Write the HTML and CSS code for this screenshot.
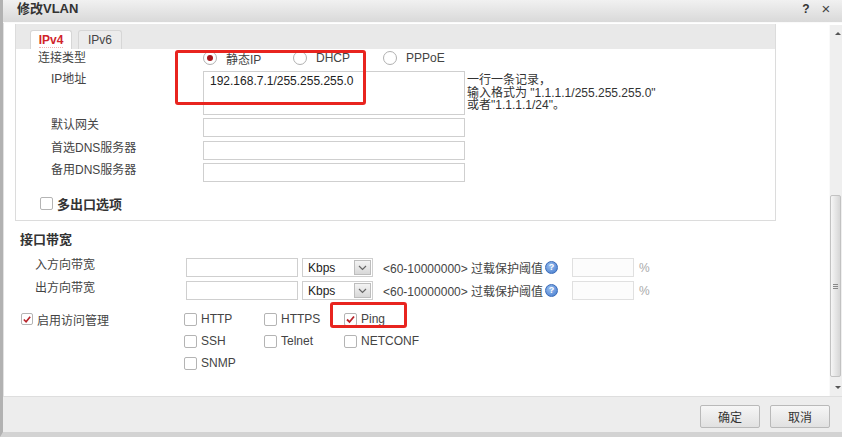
FILE: index.html
```html
<!DOCTYPE html>
<html lang="zh-CN">
<head>
<meta charset="utf-8">
<title>修改VLAN</title>
<link rel="stylesheet" href="styles.css">
</head>
<body>
<div class="window">
  <div class="titlebar">
    <span class="title">修改VLAN</span>
    <span class="tb-icons"><span class="tb-help">?</span><span class="tb-close">×</span></span>
  </div>
  <div class="main">
    <div class="content">
      <div class="panel">
        <div class="tabs">
          <div class="tab active"><span class="tab-text">IPv4</span></div>
          <div class="tab">IPv6</div>
        </div>
        <div class="panel-body">
          <div class="row row-radio">
            <div class="lbl lbl-conn">连接类型</div>
            <div class="radios">
              <span class="radio-opt"><span class="radio checked"></span>静态IP</span>
              <span class="radio-opt"><span class="radio"></span>DHCP</span>
              <span class="radio-opt"><span class="radio"></span>PPPoE</span>
            </div>
          </div>
          <div class="row row-ip">
            <div class="lbl">IP地址</div>
            <div class="textarea">192.168.7.1/255.255.255.0</div>
            <div class="hint">一行一条记录，<br>输入格式为 "1.1.1.1/255.255.255.0"<br>或者"1.1.1.1/24"。</div>
          </div>
          <div class="row row-field gw">
            <div class="lbl">默认网关</div>
            <div class="input wide"></div>
          </div>
          <div class="row row-field dns1">
            <div class="lbl">首选DNS服务器</div>
            <div class="input wide"></div>
          </div>
          <div class="row row-field dns2">
            <div class="lbl">备用DNS服务器</div>
            <div class="input wide"></div>
          </div>
          <div class="row row-multi">
            <span class="checkbox"></span><span class="bold-label">多出口选项</span>
          </div>
        </div>
      </div>

      <div class="section-title">接口带宽</div>
      <div class="bw-row first">
        <div class="bw-lbl">入方向带宽</div>
        <div class="input bw"></div>
        <div class="select"><span>Kbps</span><span class="sel-btn"><svg width="9" height="6" viewBox="0 0 9 6"><polyline points="1,1 4.5,4.5 8,1" fill="none" stroke="#666" stroke-width="1.2"/></svg></span></div>
        <div class="range">&lt;60-10000000&gt; 过载保护阈值</div>
        <span class="help">?</span>
        <div class="input pct"></div>
        <span class="pct-sign">%</span>
      </div>
      <div class="bw-row">
        <div class="bw-lbl">出方向带宽</div>
        <div class="input bw"></div>
        <div class="select"><span>Kbps</span><span class="sel-btn"><svg width="9" height="6" viewBox="0 0 9 6"><polyline points="1,1 4.5,4.5 8,1" fill="none" stroke="#666" stroke-width="1.2"/></svg></span></div>
        <div class="range">&lt;60-10000000&gt; 过载保护阈值</div>
        <span class="help">?</span>
        <div class="input pct"></div>
        <span class="pct-sign">%</span>
      </div>

      <div class="access">
        <div class="access-lbl"><span class="checkbox checked"><svg width="11" height="11" viewBox="0 0 11 11"><polyline points="2,5.5 4.5,8 9,2.5" fill="none" stroke="#b8232a" stroke-width="1.8"/></svg></span>启用访问管理</div>
        <div class="opts">
          <span class="opt"><span class="checkbox"></span>HTTP</span>
          <span class="opt"><span class="checkbox"></span>HTTPS</span>
          <span class="opt"><span class="checkbox checked"><svg width="11" height="11" viewBox="0 0 11 11"><polyline points="2,5.5 4.5,8 9,2.5" fill="none" stroke="#b8232a" stroke-width="1.8"/></svg></span>Ping</span>
          <span class="opt"><span class="checkbox"></span>SSH</span>
          <span class="opt"><span class="checkbox"></span>Telnet</span>
          <span class="opt"><span class="checkbox"></span>NETCONF</span>
          <span class="opt"><span class="checkbox"></span>SNMP</span>
        </div>
      </div>
    </div>
    <div class="scrollbar">
      <div class="sb-btn"><span class="tri-up"></span></div>
      <div class="sb-track">
        <div class="sb-thumb"><span class="grip"></span></div>
      </div>
      <div class="sb-btn"><span class="tri-down"></span></div>
    </div>
  </div>
  <div class="footer">
    <button class="btn">确定</button>
    <button class="btn">取消</button>
  </div>
</div>
<div class="mark mark-ip"></div>
<div class="mark mark-ping"></div>
</body>
</html>
```

FILE: styles.css
```css
* { box-sizing: border-box; }
html, body { margin: 0; padding: 0; }
body {
  width: 842px;
  height: 437px;
  overflow: hidden;
  position: relative;
  background: #fff;
  font-family: "Liberation Sans", "Noto Sans CJK SC", sans-serif;
  font-size: 12px;
  color: #333;
}
.window {
  height: 437px;
  display: flex;
  flex-direction: column;
  border-left: 3px solid #b2b2b2;
  border-bottom: 5px solid #d3d3d3;
}
.titlebar {
  height: 23px;
  flex: none;
  display: flex;
  align-items: flex-start;
  padding-left: 14px;
  background: linear-gradient(#f1f1f1, #d9d9d9);
  border-bottom: 1px solid #fafafa;
}
.title {
  font-size: 13px;
  font-weight: bold;
  line-height: 18px;
  color: #333;
}
.tb-icons {
  margin-left: auto;
  display: flex;
  line-height: 18px;
  padding-right: 6px;
  color: #333;
}
.tb-help { font-weight: bold; font-size: 12px; width: 20px; text-align: center; }
.tb-close { font-size: 15px; width: 20px; text-align: center; color: #444; }

.main {
  flex: 1;
  display: flex;
  min-height: 0;
}
.content {
  flex: 1;
  border-left: 1px solid #e2e2e2;
  background: #fff;
  padding-left: 11px;
  padding-top: 1px;
}
.panel {
  width: 761px;
  border: 1px solid #dcdcdc;
  border-top: none;
}
.tabs {
  height: 25px;
  background: #e9e9e9;
  display: flex;
  align-items: flex-end;
  padding-left: 14px;
  gap: 6px;
}
.tab {
  height: 19px;
  width: 44px;
  border: 1px solid #d6d6d6;
  border-bottom: none;
  border-radius: 3px 3px 0 0;
  background: #ececec;
  text-align: center;
  line-height: 18px;
  color: #444;
}
.tab.active {
  width: 42px;
  background: #fff;
  color: #d1232a;
  font-weight: bold;
}
.tab-text { border-bottom: 1px dotted #f0b0b0; }

.panel-body { padding-bottom: 10px; }
.row { display: flex; align-items: flex-start; }
.lbl {
  width: 187px;
  flex: none;
  padding-left: 35px;
  line-height: 15px;
  color: #444;
}
.row-radio { height: 18px; align-items: center; }
.row-radio .lbl { padding-left: 22px; }
.radios { display: flex; }
.radio-opt {
  width: 90px;
  display: flex;
  align-items: center;
  gap: 9px;
  color: #444;
}
.radio {
  width: 14px;
  height: 14px;
  border: 1px solid #b0b0b0;
  border-radius: 50%;
  background: #fff;
  display: flex;
  align-items: center;
  justify-content: center;
}
.radio.checked::after {
  content: "";
  width: 6px;
  height: 6px;
  border-radius: 50%;
  background: #a3141a;
}
.row-ip { margin-top: 4px; }
.row-ip .lbl { padding-top: 1px; }
.textarea {
  width: 262px;
  height: 44px;
  border: 1px solid #cfcfcf;
  padding: 2px 6px;
  line-height: 14px;
  color: #222;
}
.hint {
  margin-left: 2px;
  padding-top: 3px;
  line-height: 12.5px;
  color: #333;
}
.row-field { margin-top: 3px; }
.row-field.dns1 { margin-top: 4px; }
.input {
  height: 19px;
  border: 1px solid #cfcfcf;
  background: #fff;
}
.input.wide { width: 262px; }
.row-multi {
  margin-top: 15px;
  padding-left: 24px;
  align-items: center;
  height: 13px;
  gap: 4px;
}
.bold-label { font-weight: bold; font-size: 13px; color: #333; }
.checkbox {
  width: 13px;
  height: 13px;
  flex: none;
  border: 1px solid #b4b4b4;
  border-radius: 2px;
  background: #fff;
  display: flex;
  align-items: center;
  justify-content: center;
}

.section-title {
  margin-top: 11px;
  padding-left: 5px;
  font-size: 13px;
  font-weight: bold;
  line-height: 16px;
  color: #333;
}
.bw-row {
  display: flex;
  align-items: center;
  height: 19px;
  margin-top: 4px;
}
.bw-row.first { margin-top: 10px; }
.bw-lbl {
  width: 171px;
  padding-left: 20px;
  align-self: flex-start;
  line-height: 15px;
  color: #444;
}
.input.bw { width: 112px; }
.select {
  width: 71px;
  height: 19px;
  margin-left: 4px;
  border: 1px solid #cfcfcf;
  display: flex;
  align-items: center;
  justify-content: space-between;
  padding: 0 1px 0 5px;
  color: #222;
}
.sel-btn {
  width: 17px;
  height: 15px;
  border: 1px solid #bdbdbd;
  background: linear-gradient(#f3f3f3, #d8d8d8);
  display: flex;
  align-items: center;
  justify-content: center;
}
.range { margin-left: 10px; color: #444; white-space: nowrap; }
.help {
  width: 13px;
  height: 13px;
  margin-left: 2px;
  border-radius: 50%;
  background: radial-gradient(circle at 40% 35%, #9cc0f0, #3f78cc);
  border: 1px solid #3a6bb8;
  color: #fff;
  font-size: 9px;
  font-weight: bold;
  line-height: 11px;
  text-align: center;
}
.input.pct {
  width: 62px;
  margin-left: 14px;
  border-color: #e0e0e0;
  background: #fcfcfc;
}
.pct-sign { margin-left: 5px; color: #aaa; }

.access {
  display: flex;
  margin-top: 8px;
}
.access-lbl {
  width: 169px;
  padding-left: 6px;
  height: 22px;
  display: flex;
  align-items: center;
  gap: 4px;
  color: #444;
}
.access-lbl .checkbox { width: 12px; height: 12px; }
.opts {
  display: grid;
  grid-template-columns: 80px 80px 80px;
  grid-auto-rows: 22px;
}
.opt {
  display: flex;
  align-items: center;
  gap: 4px;
  color: #444;
}

.scrollbar {
  width: 13px;
  flex: none;
  margin-top: 2px;
  background: #efefef;
  border-left: 1px solid #fafafa;
  display: flex;
  flex-direction: column;
}
.sb-btn {
  height: 17px;
  display: flex;
  align-items: center;
  justify-content: center;
}
.tri-up {
  width: 0; height: 0;
  border-left: 3px solid transparent;
  border-right: 3px solid transparent;
  border-bottom: 3px solid #555;
  margin-left: 4px;
}
.tri-down {
  width: 0; height: 0;
  border-left: 3px solid transparent;
  border-right: 3px solid transparent;
  border-top: 3px solid #555;
  margin-left: 4px;
}
.sb-track { flex: 1; }
.sb-thumb {
  margin-top: 153px;
  width: 11px;
  height: 182px;
  border: 1px solid #c2c2c2;
  border-radius: 2px;
  background: linear-gradient(90deg, #f6f6f6, #d6d6d6);
  display: flex;
  align-items: center;
  justify-content: center;
}
.grip {
  width: 5px;
  height: 5px;
  border-top: 1px solid #888;
  border-bottom: 1px solid #888;
  position: relative;
}
.grip::after {
  content: "";
  display: block;
  margin-top: 1px;
  border-top: 1px solid #888;
}

.footer {
  height: 36px;
  flex: none;
  background: #ededed;
  border-top: 1px solid #dedede;
  display: flex;
  justify-content: flex-end;
  align-items: flex-start;
  padding: 8px 12px 0 0;
  gap: 10px;
}
.btn {
  width: 60px;
  height: 23px;
  border: 1px solid #b9b9b9;
  border-radius: 2px;
  background: linear-gradient(#f6f6f6, #e1e1e1);
  font-family: "Liberation Sans", "Noto Sans CJK SC", sans-serif;
  font-size: 12px;
  color: #333;
  padding: 0;
}

.mark {
  position: absolute;
  border: 3px solid #e8241f;
  border-radius: 3px;
}
.mark-ip { left: 175px; top: 50px; width: 191px; height: 55px; }
.mark-ping { left: 330px; top: 302px; width: 77px; height: 26px; }
```
